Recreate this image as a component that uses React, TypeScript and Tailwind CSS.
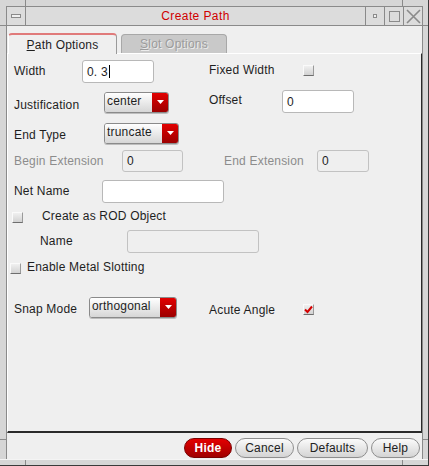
import React from "react";

const F = "font-['Liberation_Sans',Arial,sans-serif]";

function Checkbox({ checked = false }: { checked?: boolean }) {
  return (
    <div className="w-[11px] h-[11px] border border-t-[#fafafa] border-l-[#fafafa] border-r-[#9a9a9a] border-b-[#6e6e6e] bg-linear-to-b from-[#f0f0f0] to-[#d2d2d2] flex items-center justify-center">
      {checked && (
        <svg width="9" height="9" viewBox="0 0 9 9">
          <path d="M1 4.5 L3.5 7 L8 1.5" stroke="#d40000" strokeWidth="2" fill="none" />
        </svg>
      )}
    </div>
  );
}

function Input({ w, value, disabled = false, h = 23, cursor = false }: { w: number; value?: string; disabled?: boolean; h?: number; cursor?: boolean }) {
  return (
    <div
      className={`border rounded-[3px] flex items-center pl-[4px] text-[12px] text-[#1e1e1e] ${disabled ? "bg-[#efefef] border-[#c2c2c2]" : "bg-white border-[#b8b8b8]"}`}
      style={{ width: w, height: h }}
    >
      <span className="leading-[14px]">{value}</span>
      {cursor && <span className="w-px h-[13px] bg-black ml-[1px]" />}
    </div>
  );
}

function Dropdown({ w, value }: { w: number; value: string }) {
  return (
    <div
      className="flex h-[21px] border border-[#8a8a8a] rounded-[3px] overflow-hidden shadow-[0_1px_0_#bdbdbd]"
      style={{ width: w }}
    >
      <div className="flex-1 bg-linear-to-b from-white to-[#d6d6d6] pl-[2px] text-[12px] leading-[16px] text-[#1e1e1e]">{value}</div>
      <div className="w-[16px] bg-linear-to-b from-[#e20000] to-[#9c0000] flex items-start justify-center pt-[7px]">
        <svg width="7" height="4" viewBox="0 0 7 4">
          <path d="M0 0 L7 0 L3.5 4 Z" fill="white" />
        </svg>
      </div>
    </div>
  );
}

function Btn({ w, label, primary = false }: { w: number; label: string; primary?: boolean }) {
  return (
    <div
      className={`h-[20px] rounded-full border flex items-center justify-center text-[12px] ${primary ? "bg-linear-to-b from-[#e40000] to-[#a00000] border-[#7a0000] text-white font-bold" : "bg-linear-to-b from-[#fbfbfb] to-[#d4d4d4] border-[#8e8e8e] text-[#222]"}`}
      style={{ width: w }}
    >
      {label}
    </div>
  );
}

export default function App() {
  return (
    <div className={`${F} w-[429px] h-[466px] bg-[#d6d6d6] flex flex-col border-r border-b border-[#3a3a3a] text-[12px] text-[#1e1e1e] leading-[14px] tracking-[0.2px]`}>
      {/* top frame */}
      <div className="h-[6px] flex">
        <div className="w-[26px] border-r border-[#8a8a8a]" />
        <div className="w-[377px] border-r border-[#8a8a8a]" />
        <div className="flex-1" />
      </div>
      {/* middle */}
      <div className="flex-1 flex">
        <div className="w-[6px] flex flex-col">
          <div className="h-[20px] border-b border-[#8a8a8a]" />
          <div className="flex-1 border-b border-[#8a8a8a]" />
          <div className="h-[19px]" />
        </div>
        <div className="w-[417px] flex flex-col border-t border-l border-r border-[#8a8a8a]">
          {/* title bar */}
          <div className="h-[19px] flex border-b border-[#8a8a8a] bg-[#dcdcdc]">
            <div className="w-[19px] border-r border-[#8a8a8a] flex items-center justify-center">
              <div className="w-[10px] h-[4px] border border-[#8a8a8a] bg-[#efefef]" />
            </div>
            <div className="flex-1 flex items-center justify-center text-[#d00000] text-[12px] tracking-[0.4px]">Create Path</div>
            <div className="w-[19px] border-l border-[#8a8a8a] flex items-center justify-center">
              <div className="w-[4px] h-[4px] border border-[#8a8a8a] bg-[#efefef]" />
            </div>
            <div className="w-[19px] border-l border-[#8a8a8a] flex items-center justify-center">
              <div className="w-[11px] h-[11px] border border-[#8a8a8a]" />
            </div>
            <div className="w-[19px] border-l border-[#8a8a8a] flex items-center justify-center">
              <svg width="15" height="15" viewBox="0 0 15 15">
                <path d="M1 1 L14 14 M14 1 L1 14" stroke="#8a8a8a" strokeWidth="1.6" fill="none" />
              </svg>
            </div>
          </div>
          {/* content */}
          <div className="flex-1 flex flex-col bg-[#efefef]">
            {/* tabs */}
            <div className="h-[27px] pt-[7px] flex items-end pl-[1px] gap-[4px]">
              <div className="w-[109px] h-[21px] -mb-[1px] rounded-t-[4px] border-t-2 border-t-[#e07a7a] border-l border-l-white border-r border-r-[#9a9a9a] bg-[#efefef] flex items-center justify-center text-[12px] text-[#1e1e1e] z-10">
                <span><span className="underline">P</span>ath Options</span>
              </div>
              <div className="w-[106px] h-[19px] rounded-t-[4px] border border-b-0 border-[#a8a8a8] bg-[#c9c9c9] flex items-center justify-center text-[12px] text-[#9c9c9c] [text-shadow:1px_1px_0_#ececec]">
                <span><span className="underline">S</span>lot Options</span>
              </div>
            </div>
            {/* panel */}
            <div className="h-[380px] border-t border-t-white border-l border-l-white border-r border-r-[#2a2a2a] border-b-2 border-b-[#2a2a2a] flex flex-col">
              {/* Row 1 */}
              <div className="flex items-start h-[23px] mt-[6px] pl-[6px]">
                <div className="w-[68px] mt-[4px]">Width</div>
                <Input w={72} value="0. 3" cursor />
                <div className="w-[55px]" />
                <div className="w-[94px] mt-[3px]">Fixed Width</div>
                <div className="mt-[5px]"><Checkbox /></div>
              </div>
              {/* Row 2 */}
              <div className="flex items-start h-[23px] mt-[7px] pl-[6px]">
                <div className="w-[90px] mt-[8px]">Justification</div>
                <div className="mt-[2px]"><Dropdown w={65} value="center" /></div>
                <div className="w-[40px]" />
                <div className="w-[73px] mt-[3px]">Offset</div>
                <Input w={72} value="0" />
              </div>
              {/* Row 3 */}
              <div className="flex items-start h-[21px] mt-[10px] pl-[6px]">
                <div className="w-[90px] mt-[5px]">End Type</div>
                <Dropdown w={75} value="truncate" />
              </div>
              {/* Row 4 */}
              <div className="flex items-start h-[22px] mt-[6px] pl-[6px] text-[#8c8c8c]">
                <div className="w-[108px] mt-[4px]">Begin Extension</div>
                <Input w={61} h={22} value="0" disabled />
                <div className="w-[41px]" />
                <div className="w-[93px] mt-[4px]">End Extension</div>
                <Input w={52} h={22} value="0" disabled />
              </div>
              {/* Row 5 */}
              <div className="flex items-start h-[23px] mt-[8px] pl-[6px]">
                <div className="w-[88px] mt-[4px]">Net Name</div>
                <Input w={122} />
              </div>
              {/* Row 6 */}
              <div className="flex items-start h-[14px] mt-[6px] pl-[4px]">
                <div className="mt-[3px]"><Checkbox /></div>
                <div className="ml-[19px]">Create as ROD Object</div>
              </div>
              {/* Row 7 */}
              <div className="flex items-start h-[23px] mt-[7px] pl-[32px]">
                <div className="w-[87px] mt-[4px]">Name</div>
                <Input w={132} disabled />
              </div>
              {/* Row 8 */}
              <div className="flex items-start h-[14px] mt-[7px] pl-[2px]">
                <div className="mt-[3px]"><Checkbox /></div>
                <div className="ml-[6px]">Enable Metal Slotting</div>
              </div>
              {/* Row 9 */}
              <div className="flex items-start h-[21px] mt-[23px] pl-[6px]">
                <div className="w-[75px] mt-[5px]">Snap Mode</div>
                <Dropdown w={88} value="orthogonal" />
                <div className="w-[32px]" />
                <div className="w-[94px] mt-[6px]">Acute Angle</div>
                <div className="mt-[7px]"><Checkbox checked /></div>
              </div>
            </div>
            {/* buttons */}
            <div className="flex-1 flex justify-end items-start pt-[5px] pr-[2px] gap-[3px]">
              <Btn w={48} label="Hide" primary />
              <Btn w={59} label="Cancel" />
              <Btn w={71} label="Defaults" />
              <Btn w={49} label="Help" />
            </div>
          </div>
        </div>
        <div className="flex-1 flex flex-col">
          <div className="h-[20px] border-b border-[#8a8a8a]" />
          <div className="flex-1 border-b border-[#8a8a8a]" />
          <div className="h-[19px]" />
        </div>
      </div>
      {/* bottom frame */}
      <div className="h-[6px] flex border-t border-t-[#f4f4f4]">
        <div className="w-[26px] border-r border-[#8a8a8a]" />
        <div className="w-[377px] border-r border-[#8a8a8a]" />
        <div className="flex-1" />
      </div>
    </div>
  );
}
